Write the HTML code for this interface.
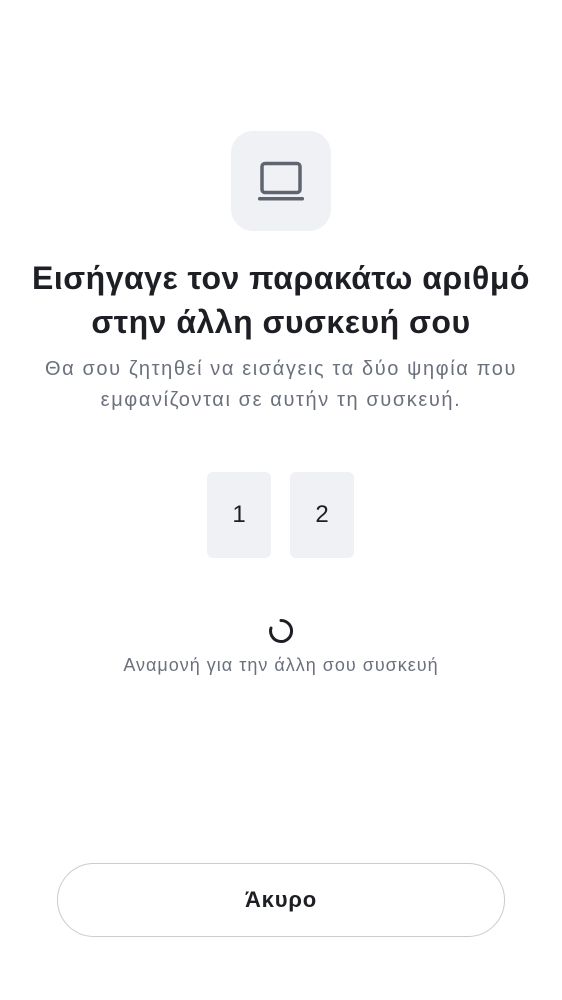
<!DOCTYPE html>
<html><head><meta charset="utf-8"><style>
body{margin:0;width:562px;height:1000px;background:#fff;font-family:"Liberation Sans",sans-serif;position:relative;overflow:hidden}
.icon{position:absolute;left:231px;top:131px;width:100px;height:100px;border-radius:22px;background:#f0f1f5}
h1{position:absolute;left:0;width:562px;top:256px;margin:0;text-align:center;font-size:32px;line-height:44px;font-weight:bold;color:#1d1f24;letter-spacing:0.5px}
p{position:absolute;left:0;width:562px;top:354px;margin:0;text-align:center;font-size:20px;line-height:31px;color:#6b717c;letter-spacing:1.6px}
.box{position:absolute;top:472px;width:64px;height:86px;border-radius:6px;background:#f0f1f5;font-size:24px;color:#1d1f24;text-align:center;line-height:86px}
.wait{position:absolute;left:0;width:562px;top:655px;text-align:center;font-size:18px;color:#6b717c;letter-spacing:1px}
.btn{position:absolute;left:57px;top:863px;width:446px;height:72px;border:1.5px solid #c9cbd1;border-radius:37px;text-align:center;line-height:72px;font-size:22px;font-weight:bold;color:#1d1f24;letter-spacing:0.8px}
</style></head><body>
<div class="icon"><svg width="100" height="100" viewBox="0 0 100 100"><rect x="31" y="32.5" width="38" height="29" rx="3" fill="none" stroke="#5f6570" stroke-width="3.5"/><rect x="27" y="66" width="46" height="3.5" rx="1.5" fill="#5f6570"/></svg></div>
<h1>Εισήγαγε τον παρακάτω αριθμό<br>στην άλλη συσκευή σου</h1>
<p>Θα σου ζητηθεί να εισάγεις τα δύο ψηφία που<br>εμφανίζονται σε αυτήν τη συσκευή.</p>
<div class="box" style="left:207px">1</div>
<div class="box" style="left:290px">2</div>
<svg style="position:absolute;left:267px;top:617px" width="28" height="28" viewBox="0 0 28 28"><path d="M14 3.5 A10.5 10.5 0 1 1 4 11" fill="none" stroke="#1d1f24" stroke-width="3" stroke-linecap="round"/></svg>
<div class="wait">Αναμονή για την άλλη σου συσκευή</div>
<div class="btn">Άκυρο</div>
</body></html>
